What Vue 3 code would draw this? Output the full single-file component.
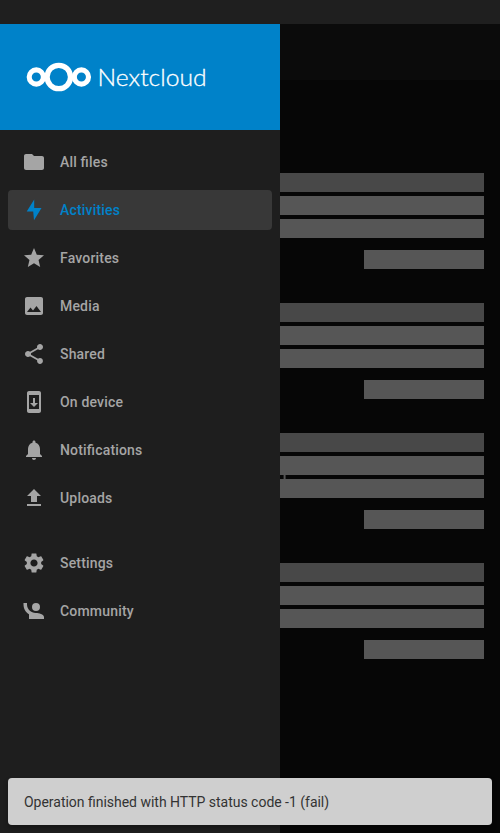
<script setup>
const mainItems = [
  { label: 'All files', path: 'M10 4H4c-1.1 0-1.99.9-1.99 2L2 18c0 1.1.9 2 2 2h16c1.1 0 2-.9 2-2V8c0-1.1-.9-2-2-2h-8l-2-2z' },
  { label: 'Activities', active: true, path: 'M11.2 13.4H4.7L12.2 1.6V10H19.5L12 22.2z' },
  { label: 'Favorites', path: 'M12 17.27L18.18 21l-1.64-7.03L22 9.24l-7.19-.61L12 2 9.19 8.63 2 9.24l5.46 4.73L5.82 21z' },
  { label: 'Media', path: 'M21 19V5c0-1.1-.9-2-2-2H5c-1.1 0-2 .9-2 2v14c0 1.1.9 2 2 2h14c1.1 0 2-.9 2-2zM8.5 13.5l2.5 3.01L14.5 12l4.5 6H5l3.5-4.5z' },
  { label: 'Shared', path: 'M18 16.08c-.76 0-1.44.3-1.96.77L8.91 12.7c.05-.23.09-.46.09-.7s-.04-.47-.09-.7l7.05-4.11c.54.5 1.25.81 2.04.81 1.66 0 3-1.34 3-3s-1.34-3-3-3-3 1.34-3 3c0 .24.04.47.09.7L8.04 9.81C7.5 9.31 6.79 9 6 9c-1.66 0-3 1.34-3 3s1.34 3 3 3c.79 0 1.5-.31 2.04-.81l7.12 4.16c-.05.21-.08.43-.08.65 0 1.61 1.31 2.92 2.92 2.92s2.92-1.31 2.92-2.92-1.31-2.92-2.92-2.92z' },
  { label: 'On device', path: 'M17 1.01L7 1c-1.1 0-2 .9-2 2v18c0 1.1.9 2 2 2h10c1.1 0 2-.9 2-2V3c0-1.1-.9-1.99-2-1.99zM17 19H7V5h10v14zm-1-6h-3V8h-2v5H8l4 4 4-4z' },
  { label: 'Notifications', path: 'M12 22c1.1 0 2-.9 2-2h-4c0 1.1.89 2 2 2zm6-6v-5c0-3.07-1.64-5.64-4.5-6.32V4c0-.83-.67-1.5-1.5-1.5s-1.5.67-1.5 1.5v.68C7.63 5.36 6 7.92 6 11v5l-2 2v1h16v-1l-2-2z' },
  { label: 'Uploads', path: 'M9 16h6v-6h4l-7-7-7 7h4zm-4 2h14v2H5z' },
]
const extraItems = [
  { label: 'Settings', path: 'M19.14 12.94c.04-.3.06-.61.06-.94 0-.32-.02-.64-.07-.94l2.03-1.58c.18-.14.23-.41.12-.61l-1.92-3.32c-.12-.22-.37-.29-.59-.22l-2.39.96c-.5-.38-1.03-.7-1.62-.94l-.36-2.54c-.04-.24-.24-.41-.48-.41h-3.84c-.24 0-.43.17-.47.41l-.36 2.54c-.59.24-1.13.57-1.62.94l-2.39-.96c-.22-.08-.47 0-.59.22L2.74 8.87c-.12.21-.08.47.12.61l2.03 1.58c-.05.3-.09.63-.09.94s.02.64.07.94l-2.03 1.58c-.18.14-.23.41-.12.61l1.92 3.32c.12.22.37.29.59.22l2.39-.96c.5.38 1.03.7 1.62.94l.36 2.54c.05.24.24.41.48.41h3.84c.24 0 .44-.17.47-.41l.36-2.54c.59-.24 1.13-.56 1.62-.94l2.39.96c.22.08.47 0 .59-.22l1.92-3.32c.12-.22.07-.47-.12-.61l-2.01-1.58zM12 15.6c-1.98 0-3.6-1.62-3.6-3.6s1.62-3.6 3.6-3.6 3.6 1.62 3.6 3.6-1.62 3.6-3.6 3.6z' },
  { label: 'Community', path: 'M1.5 4v1.5c0 4.15 2.21 7.78 5.5 9.8V20h15v-2c0-2.66-5.33-4-8-4h-.25C9 14 5 10 5 5.5V4M14 4a4 4 0 0 0-4 4 4 4 0 0 0 4 4 4 4 0 0 0 4-4 4 4 0 0 0-4-4z' },
]
const groups = [mainItems, extraItems]
</script>

<template>
  <div class="screen">
    <div class="status"></div>
    <div class="body">
      <aside class="drawer">
        <header class="brand">
          <svg class="logo" width="182" height="32" viewBox="0 0 182 32">
            <g fill="none" stroke="#fff">
              <circle cx="10.3" cy="16" r="7.1" stroke-width="5.1" />
              <circle cx="32.8" cy="16" r="11.7" stroke-width="5.3" />
              <circle cx="55.4" cy="16" r="7.1" stroke-width="5.1" />
            </g>
            <text class="wordmark" x="71.6" y="24.8" textLength="109" lengthAdjust="spacingAndGlyphs">Nextcloud</text>
          </svg>
        </header>
        <nav v-for="(items, g) in groups" :key="g" class="menu">
          <a v-for="item in items" :key="item.label" class="item" :class="{ active: item.active }">
            <svg class="icon" viewBox="0 0 24 24"><path :d="item.path" /></svg>
            <span>{{ item.label }}</span>
          </a>
        </nav>
      </aside>
      <main class="content">
        <div class="toolbar"></div>
        <div class="list">
          <section v-for="n in 4" :key="n" class="entry">
            <div class="bar title"></div>
            <div class="bar"></div>
            <div class="bar"></div>
            <div class="bar short"></div>
            <i v-if="n === 3" class="tick"></i>
          </section>
        </div>
      </main>
    </div>
    <div class="snackbar">Operation finished with HTTP status code -1 (fail)</div>
  </div>
</template>

<style>
body { background: #060606; overflow: hidden; }
</style>

<style scoped>
.screen {
  position: relative;
  display: flex;
  flex-direction: column;
  height: 833px;
  font-family: Roboto, sans-serif;
  font-size: 14px;
}
.status { height: 24px; background: #1f1f1f; }
.body { flex: 1; display: flex; }
.drawer { width: 280px; background: #1e1e1e; }
.brand {
  box-sizing: border-box;
  height: 106px;
  padding: 37px 0 0 26px;
  background: #0082c9;
}
.logo { display: block; overflow: visible; }
.wordmark {
  font-family: Lato, sans-serif;
  font-weight: 300;
  font-size: 23px;
  fill: #fff;
  stroke: #fff;
  stroke-width: 0.3px;
}
.menu {
  display: flex;
  flex-direction: column;
  gap: 8px;
  padding: 12px 8px;
}
.menu + .menu { padding-top: 13px; }
.item {
  box-sizing: border-box;
  display: flex;
  align-items: center;
  gap: 14px;
  height: 40px;
  padding-left: 14px;
  border-radius: 4px;
  color: #a5a5a5;
  font-weight: 500;
  letter-spacing: 0.18px;
  font-feature-settings: "liga" 1;
}
.active { background: #383838; color: #0082c9; }
.icon { width: 24px; height: 24px; fill: currentColor; }
.content { flex: 1; background: #060606; }
.toolbar { height: 56px; background: #0b0b0b; }
.list {
  display: flex;
  flex-direction: column;
  gap: 34px;
  padding: 93px 16px 0 0;
}
.entry {
  position: relative;
  display: flex;
  flex-direction: column;
  gap: 4px;
}
.bar { height: 19px; background: #565656; }
.title { background: #484848; }
.short { width: 120px; margin-top: 8px; align-self: flex-end; }
.tick {
  position: absolute;
  left: 3px;
  top: 42px;
  width: 3px;
  height: 4px;
  background: linear-gradient(90deg, #262626 33%, #555 33% 67%, #333 67%);
}
.snackbar {
  position: absolute;
  left: 8px;
  right: 8px;
  bottom: 8px;
  box-sizing: border-box;
  height: 47px;
  padding-left: 16px;
  border-radius: 4px;
  background: #cfcfcf;
  color: #333;
  line-height: 48px;
  letter-spacing: -0.02px;
  font-feature-settings: "liga" 1;
  box-shadow: 0 3px 5px rgba(0, 0, 0, 0.3);
}
</style>
